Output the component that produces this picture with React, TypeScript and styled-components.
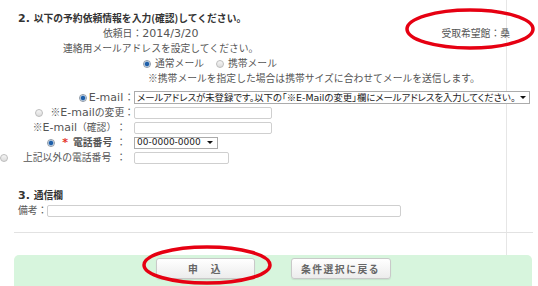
import styled, { createGlobalStyle } from 'styled-components';

const GlobalStyle = createGlobalStyle`
  html, body {
    margin: 0;
    padding: 0;
    background: #fff;
  }
  body {
    font-family: "Noto Sans CJK JP", sans-serif;
    font-size: 9.8px;
    line-height: 15px;
    color: #555;
  }
`;

const Page = styled.div`
  position: relative;
  width: 538px;
  height: 286px;
  overflow: hidden;
`;

const Column = styled.div<{ $h: number; $pt?: number }>`
  box-sizing: border-box;
  width: 507px;
  height: ${p => p.$h}px;
  padding-top: ${p => p.$pt ?? 0}px;
  border-right: 1px solid #e6e6e6;
`;

const Lat = styled.span<{ $size?: number }>`
  font-family: "DejaVu Sans", Verdana, sans-serif;
  font-size: ${p => p.$size ?? 11}px;
  line-height: 11px;
`;

const Title = styled.div`
  padding-left: 18px;
  font-weight: bold;
  color: #333;
`;

const Line = styled.div<{ $indent: number }>`
  display: flex;
  align-items: center;
  height: 15px;
  padding-left: ${p => p.$indent}px;
  white-space: nowrap;
`;

const InfoRow = styled.div`
  display: flex;
  justify-content: space-between;
  align-items: center;
  height: 15px;
  padding-left: 103px;
`;

const Pickup = styled.span`
  margin-right: -4px;
`;

const Radio = styled.span<{ $on?: boolean; $mr?: string }>`
  display: inline-block;
  box-sizing: border-box;
  width: 8px;
  height: 8px;
  flex: none;
  border-radius: 50%;
  margin-right: ${p => p.$mr ?? '4px'};
  border: 1px solid ${p => (p.$on ? '#8e99a6' : '#bdbdbd')};
  background: ${p =>
    p.$on
      ? 'radial-gradient(circle, #1f5fa8 0 1.6px, #5b92d0 2.2px, #dfe6ee 2.8px)'
      : 'linear-gradient(#f6f6f6, #dcdcdc)'};
`;

const RadioGap = styled.span`
  display: inline-block;
  width: 12px;
`;

const FormGrid = styled.div`
  display: grid;
  grid-template-columns: 134px 1fr;
  grid-auto-rows: 15px;
  margin-top: 4px;
`;

const Label = styled.div<{ $pad?: number; $bold?: boolean }>`
  display: flex;
  justify-content: flex-end;
  align-items: center;
  padding-right: ${p => p.$pad ?? 0}px;
  white-space: nowrap;
  font-weight: ${p => (p.$bold ? 'bold' : 'normal')};
`;

const Colon = styled.span<{ $ml?: number }>`
  margin-left: ${p => p.$ml ?? 0}px;
  font-weight: normal;
`;

const Required = styled.span`
  font-family: "DejaVu Sans", sans-serif;
  font-weight: bold;
  font-size: 11px;
  color: #e5332a;
  margin-right: 5px;
`;

const Value = styled.div`
  display: flex;
  align-items: center;
`;

const TextBox = styled.div<{ $w: number }>`
  box-sizing: border-box;
  width: ${p => p.$w}px;
  height: 12px;
  border: 1px solid #cfcfcf;
  border-radius: 2px;
  background: #fff;
`;

const SelectBox = styled.div<{ $w: number; $h?: number }>`
  box-sizing: border-box;
  display: flex;
  align-items: center;
  justify-content: space-between;
  width: ${p => p.$w}px;
  height: ${p => p.$h ?? 12}px;
  padding: 0 4px 0 2px;
  border: 1px solid #ababab;
  background: #fff;
  color: #222;
  font-size: 9.4px;
  font-feature-settings: "palt";
  white-space: nowrap;
  overflow: hidden;
`;

const Arrow = styled.span`
  flex: none;
  width: 0;
  height: 0;
  margin-left: 4px;
  border-left: 3px solid transparent;
  border-right: 3px solid transparent;
  border-top: 3.5px solid #111;
`;

const Heading = styled.div`
  margin-top: 23px;
  padding-left: 18px;
  font-weight: bold;
  color: #333;
`;

const Divider = styled.div`
  width: 519px;
  height: 1px;
  margin-left: 14px;
  background: #e2e2e2;
`;

const ActionBar = styled.div`
  box-sizing: border-box;
  display: flex;
  justify-content: center;
  gap: 36px;
  width: 518px;
  height: 40px;
  margin-left: 14px;
  padding-top: 3px;
  border-radius: 5px 5px 0 0;
  background: #d7f5dd;
`;

const Button = styled.button<{ $w: number; $ls: number }>`
  box-sizing: border-box;
  width: ${p => p.$w}px;
  height: 21px;
  padding: 0;
  border: 1px solid #c9c9c9;
  border-radius: 3px;
  background: linear-gradient(#ffffff, #ececec);
  box-shadow: 0 1px 1px rgba(0, 0, 0, 0.08);
  font-family: "Noto Sans CJK JP", sans-serif;
  font-size: 9.8px;
  font-weight: bold;
  letter-spacing: ${p => p.$ls}px;
  color: #666;
`;

const Marks = styled.svg`
  position: absolute;
  left: 0;
  top: 0;
  pointer-events: none;
`;

export default function App() {
  return (
    <Page>
      <GlobalStyle />
      <Column $h={232} $pt={11}>
        <Title>
          <Lat>2. </Lat>以下の予約依頼情報を入力(確認)してください。
        </Title>
        <InfoRow>
          <span>
            依頼日：<Lat>2014/3/20</Lat>
          </span>
          <Pickup>受取希望館：桑</Pickup>
        </InfoRow>
        <Line $indent={63}>連絡用メールアドレスを設定してください。</Line>
        <Line $indent={143}>
          <Radio $on />
          通常メール
          <RadioGap />
          <Radio />
          携帯メール
        </Line>
        <Line $indent={148}>※携帯メールを指定した場合は携帯サイズに合わせてメールを送信します。</Line>

        <FormGrid>
          <Label>
            <Radio $on $mr="2px" />
            <Lat>E-mail</Lat>
            <Colon $ml={1}>：</Colon>
          </Label>
          <Value>
            <SelectBox $w={396} $h={13}>
              <span>
                メールアドレスが未登録です。以下の「※<Lat $size={9.4}>E-Mail</Lat>の変更」欄にメールアドレスを入力してください。
              </span>
              <Arrow />
            </SelectBox>
          </Value>

          <Label>
            <Radio $mr="8px" />※<Lat>E-mail</Lat>の変更<Colon>：</Colon>
          </Label>
          <Value>
            <TextBox $w={138} />
          </Value>

          <Label $pad={8}>
            ※<Lat>E-mail</Lat>（確認）<Colon>：</Colon>
          </Label>
          <Value>
            <TextBox $w={138} />
          </Value>

          <Label $pad={8} $bold>
            <Radio $on $mr="7px" />
            <Required>*</Required>電話番号<Colon $ml={4}>：</Colon>
          </Label>
          <Value>
            <SelectBox $w={84}>
              <Lat $size={9}>00-0000-0000</Lat>
              <Arrow />
            </SelectBox>
          </Value>

          <Label $pad={8}>
            <Radio $mr="auto" />
            上記以外の電話番号<Colon $ml={5}>：</Colon>
          </Label>
          <Value>
            <TextBox $w={95} />
          </Value>
        </FormGrid>

        <Heading>
          <Lat>3. </Lat>通信欄
        </Heading>
        <Line $indent={18}>
          備考：
          <TextBox $w={354} />
        </Line>
      </Column>
      <Divider />
      <Column $h={22} />
      <ActionBar>
        <Button $w={99} $ls={1.5}>申　込</Button>
        <Button $w={100} $ls={1.5}>条件選択に戻る</Button>
      </ActionBar>

      <Marks width={538} height={286}>
        <ellipse cx={470} cy={29} rx={63} ry={19} fill="none" stroke="#e60012" strokeWidth={3.5} />
        <ellipse cx={207} cy={265} rx={63} ry={18} fill="none" stroke="#e60012" strokeWidth={3.5} />
      </Marks>
    </Page>
  );
}
